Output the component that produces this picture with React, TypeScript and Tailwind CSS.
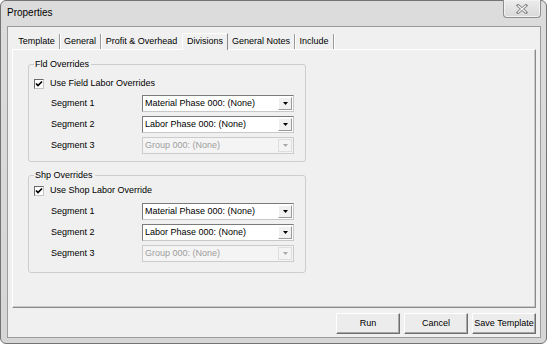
import clsx from 'clsx';

const tabs = [
  { label: 'Template', width: 'w-[46px]', sep: true },
  { label: 'General', width: 'w-[41px]', sep: true },
  { label: 'Profit & Overhead', width: 'w-[81px]', sep: false },
  { label: 'Divisions', width: 'w-[46px]', active: true },
  { label: 'General Notes', width: 'w-[67px]', sep: true },
  { label: 'Include', width: 'w-[39px]', sep: true },
];

function Combo({ value, disabled }: { value: string; disabled?: boolean }) {
  return (
    <div
      className={clsx(
        'flex w-[152px] h-[17px] border',
        disabled
          ? 'border-[#cbcbcb] bg-[#f4f4f4] text-[#9d9d9d]'
          : 'border-t-[#7b7b7b] border-l-[#7b7b7b] border-r-[#c8c8c8] border-b-[#c8c8c8] bg-white text-black',
      )}
    >
      <span className="flex-1 pl-[2px] leading-[15px] whitespace-nowrap overflow-hidden">{value}</span>
      <span
        className={clsx(
          'w-[14px] h-[13px] m-[1px] flex items-center justify-center border',
          disabled
            ? 'bg-[#f4f4f4] border-[#dedede]'
            : 'bg-[#f0f0f0] border-t-white border-l-white border-r-[#9a9a9a] border-b-[#9a9a9a]',
        )}
      >
        <svg width="5" height="3" viewBox="0 0 5 3">
          <path d="M0 0H5L2.5 3Z" fill={disabled ? '#a8a8a8' : '#000'} />
        </svg>
      </span>
    </div>
  );
}

function SegmentRow({ label, value, disabled }: { label: string; value: string; disabled?: boolean }) {
  return (
    <div className="flex items-center h-[17px]">
      <span className="ml-[17px] w-[91px] leading-[11px]">{label}</span>
      <Combo value={value} disabled={disabled} />
    </div>
  );
}

function CheckRow({ label }: { label: string }) {
  return (
    <div className="flex items-center h-[11px]">
      <span className="w-[10px] h-[10px] border border-t-[#6a6a6a] border-l-[#6a6a6a] border-r-[#c4c4c4] border-b-[#c4c4c4] bg-white flex items-center justify-center">
        <svg width="8" height="8" viewBox="0 0 8 8">
          <path d="M1 3.5L3 5.5L7 1.5" stroke="#000" strokeWidth="1.7" fill="none" />
        </svg>
      </span>
      <span className="ml-[6px] leading-[11px]">{label}</span>
    </div>
  );
}

function Overrides({
  title,
  check,
  className,
  checkGap,
  rowGap,
  bottom,
}: {
  title: string;
  check: string;
  className: string;
  checkGap: string;
  rowGap: string;
  bottom: string;
}) {
  return (
    <fieldset
      className={clsx(
        'ml-[15px] w-[278px] pl-[5px] border border-[#cdcdcd] rounded-[3px]',
        className,
        bottom,
      )}
    >
      <legend className="pl-[1px] pr-[2px] leading-[11px]">{title}</legend>
      <div className={checkGap}>
        <CheckRow label={check} />
      </div>
      <div className={clsx('flex flex-col gap-[4px]', rowGap)}>
        <SegmentRow label="Segment 1" value="Material Phase 000: (None)" />
        <SegmentRow label="Segment 2" value="Labor Phase 000: (None)" />
        <SegmentRow label="Segment 3" value="Group 000: (None)" disabled />
      </div>
    </fieldset>
  );
}

function Button({ label }: { label: string }) {
  return (
    <button className="w-[64px] h-[21px] bg-[#ececec] border border-t-white border-l-white border-r-[#6e6e6e] border-b-[#6e6e6e] shadow-[inset_-1px_-1px_0_#a8a8a8] text-center leading-[19px] whitespace-nowrap">
      {label}
    </button>
  );
}

export default function App() {
  return (
    <div className="w-[547px] h-[344px] bg-white font-['Liberation_Sans',Arial,sans-serif] text-[9px] text-black">
      <div className="w-full h-full flex flex-col rounded-[6px] border border-[#747474] bg-[linear-gradient(180deg,#dcdcdc_0%,#d6d6d6_100%)]">
        {/* Title bar */}
        <div className="h-[25px] flex justify-between">
          <span className="ml-[6px] mt-[6px] text-[10px] leading-[12px]">Properties</span>
          <div className="-mt-[1px] mr-[5px] w-[38px] h-[18px] rounded-b-[4px] border border-t-0 border-[#8e8e8e] bg-[linear-gradient(180deg,#ececec_0%,#d9d9d9_100%)] shadow-[inset_0_0_0_1px_#f2f2f2] flex items-center justify-center">
            <svg width="12" height="10" viewBox="0 0 12 10">
              <path d="M2 1.5L10 8.5M10 1.5L2 8.5" stroke="#8a8a8a" strokeWidth="3" strokeLinecap="square" />
              <path d="M2 1.5L10 8.5M10 1.5L2 8.5" stroke="#f6f6f6" strokeWidth="1.1" />
            </svg>
          </div>
        </div>

        {/* Client area */}
        <div className="flex-1 ml-[6px] mr-[5px] mb-[5px] border border-[#9b9b9b] bg-[#f0f0f0] flex flex-col pt-[5px] pl-[4px] pr-[4px]">
          {/* Tabs */}
          <div className="flex items-end h-[17px] ml-[2px]">
            {tabs.map((t) =>
              t.active ? (
                <div
                  key={t.label}
                  className={clsx(
                    t.width,
                    'relative z-10 h-[17px] -mb-[1px] bg-[#f0f0f0] border-t border-l border-r border-t-white border-l-white border-r-[#8a8a8a] text-center leading-[14px]',
                  )}
                >
                  {t.label}
                </div>
              ) : (
                <div
                  key={t.label}
                  className={clsx(
                    t.width,
                    'h-[15px] flex items-center justify-center',
                    t.sep && 'border-r border-r-[#9a9a9a] shadow-[1px_0_0_white]',
                  )}
                >
                  {t.label}
                </div>
              ),
            )}
          </div>

          {/* Tab panel */}
          <div className="h-[259px] border border-t-white border-l-white border-r-[#8a8a8a] border-b-[#8a8a8a] shadow-[inset_-1px_-1px_0_#c9c9c9] flex flex-col">
            <Overrides
              title="Fld Overrides"
              check="Use Field Labor Overrides"
              className="mt-[9px]"
              checkGap="mt-[8px]"
              rowGap="mt-[6px]"
              bottom="pb-[7px]"
            />
            <Overrides
              title="Shp Overrides"
              check="Use Shop Labor Override"
              className="mt-[8px]"
              checkGap="mt-[4px]"
              rowGap="mt-[7px]"
              bottom="pb-[10px]"
            />
          </div>

          {/* Buttons */}
          <div className="mt-[5px] flex justify-end gap-[4px]">
            <Button label="Run" />
            <Button label="Cancel" />
            <Button label="Save Template" />
          </div>
        </div>
      </div>
    </div>
  );
}
